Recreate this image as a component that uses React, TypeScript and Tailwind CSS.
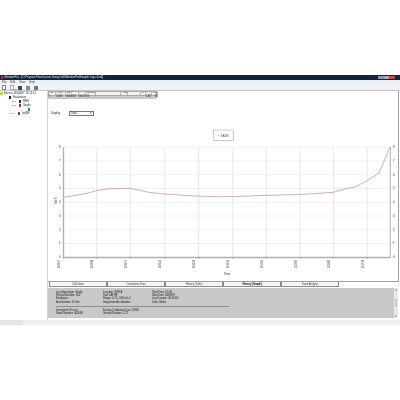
const font = 'font-["Liberation_Sans",Arial,sans-serif]';
const svgFont = 'Liberation Sans, Arial, sans-serif';

const yGrid = [161, 174.8, 188.5, 202.3, 216, 229.8, 243.5, 147.3];
const xGrid = [96.7, 130.3, 164.7, 198.7, 232.7, 266.3, 300, 333.3, 367.3];
const xLabels = ['12:08:17', '12:08:44', '12:09:17', '12:09:50', '12:10:24', '12:10:58', '12:11:32', '12:12:06', '12:12:40', '12:13:14'];
const curve =
  '64,197.3 87,193.3 96,190.7 110,188.7 130,188.3 150,192.5 165,194 195,196 220,196.7 237,196.5 266,195.3 300,194.5 333,192.3 345,189 356,186.7 368,180 379,173 390,147';

const tableHead = ['No', 'Time', 'Date', '', 'Duration', '', 'Peak', '', 'X', 'Y', 'Sel'];

function Chart() {
  return (
    <svg viewBox="48 91 350 190" className="block h-[190px] w-[350px]">
      {yGrid.map((y) => (
        <line key={y} x1={63} x2={390} y1={y} y2={y} stroke="#ebebeb" strokeWidth="0.7" />
      ))}
      {xGrid.map((x) => (
        <line key={x} x1={x} x2={x} y1={147} y2={257} stroke="#dedede" strokeWidth="0.7" />
      ))}
      <line x1={63.5} x2={63.5} y1={147} y2={258} stroke="#b0b0b0" strokeWidth="1.4" />
      <line x1={63} x2={390} y1={257.5} y2={257.5} stroke="#b0b0b0" strokeWidth="1.4" />
      <line x1={390.3} x2={390.3} y1={147} y2={258} stroke="#8c8c8c" strokeWidth="0.7" />
      <polyline points={curve} fill="none" stroke="#c49a9a" strokeWidth="0.8" />

      {[8, 7, 6, 5, 4, 3, 2, 1, 0].map((n, i) => {
        const y = 147.3 + i * 13.73 + 1;
        return (
          <g key={n} fontSize="2.8" fill="#222" fontFamily={svgFont}>
            <text x={59} y={y}>{n}</text>
            <text x={393} y={y}>{n}</text>
          </g>
        );
      })}

      {[63.5, ...xGrid].map((x, i) => (
        <g key={x}>
          <line x1={x} x2={x} y1={257} y2={259} stroke="#777" strokeWidth="0.4" />
          <text
            transform={`translate(${x - 3.5} 268.5) rotate(-90)`}
            fontSize="3"
            fill="#333"
            fontFamily={svgFont}
            textLength={8.5}
            lengthAdjust="spacingAndGlyphs"
          >
            {xLabels[i]}
          </text>
        </g>
      ))}

      <text transform="translate(57 204) rotate(-90)" fontSize="2.8" fill="#222" fontFamily={svgFont}>
        Vel X
      </text>
      <text x={224} y={274.5} fontSize="2.8" fill="#222" fontFamily={svgFont}>
        Time
      </text>

      <rect x={213.5} y={130} width={20} height={10.5} fill="#fff" stroke="#a8a8a8" strokeWidth="0.6" />
      <line x1={217} x2={219.5} y1={135.5} y2={135.5} stroke="#c49a9a" strokeWidth="0.6" />
      <text x={220.5} y={136.5} fontSize="2.6" fill="#333" fontFamily={svgFont}>
        X AXIS
      </text>
    </svg>
  );
}

function Tab({ label, active }: { label: string; active?: boolean }) {
  return (
    <div
      className={`flex h-[5px] w-[58px] items-center justify-center border border-t-0 border-[#8a8a8a] bg-[#f6f6f6] text-[2.8px] leading-none tracking-[-0.1px] ${active ? 'font-bold text-[#111]' : 'text-[#444]'}`}
    >
      {label}
    </div>
  );
}

function TreeRow({ indent, color, label, guide }: { indent: string; color: string; label: string; guide?: boolean }) {
  return (
    <div className={`flex h-[4px] items-center gap-[2px] ${indent}`}>
      {guide && <div className="-ml-[7px] mr-[1px] h-0 w-[4px] border-t-[0.5px] border-dotted border-[#aaa]" />}
      <div className={`h-[3px] w-[2px] ${color}`} />
      <span className="text-[2.8px] leading-none text-[#222]">{label}</span>
    </div>
  );
}

export default function App() {
  return (
    <div className={`flex h-[400px] w-[400px] flex-col overflow-hidden bg-white pt-[75px] blur-[0.2px] ${font}`}>
      {/* title bar */}
      <div className="flex h-[5px] items-center justify-between bg-[#14233c] pl-[1px]">
        <div className="flex items-center gap-[1px]">
          <div className="h-[3px] w-[2px] bg-[#c03030]" />
          <span className="text-[2.8px] leading-none tracking-[-0.05px] text-[#e0e4ea]">
            VibrationPro - [C:\Program Files\Larson Group Ltd\VibrationPro\Sample Logs 4.vdf]
          </span>
        </div>
        <div className="mr-[5px] flex h-[3px]">
          <div className="w-[6px] bg-[#8f98a8]" />
          <div className="w-[5px] bg-[#a7adb8]" />
          <div className="w-[6px] bg-[#c04a45]" />
        </div>
      </div>

      {/* menu */}
      <div className="flex h-[5px] items-center gap-[4px] bg-[#eef1f6] pl-[2px] text-[2.8px] leading-none text-[#333]">
        <span>File</span>
        <span>Edit</span>
        <span>View</span>
        <span>Help</span>
      </div>

      {/* toolbar */}
      <div className="flex h-[6px] items-center border-b border-[#c4c4c4] bg-[#f0f2f6] pl-[2px]">
        <div className="h-[5px] w-[4px] border-[0.5px] border-[#888] bg-white" />
        <div className="ml-[4px] h-[5px] w-[4px] border-[0.5px] border-[#aaa] bg-white" />
        <div className="mt-[3px] h-[1px] w-[3px] bg-[#c9b23a]" />
        <div className="ml-[1px] h-[4px] w-[4px] bg-[#444]" />
        <div className="ml-[4px] h-[4px] w-[4px] bg-[#7a8c8c]" />
        <div className="ml-[4px] h-[4px] w-[4px] bg-[#777]" />
      </div>

      <div className="flex h-[229px]">
        {/* tree */}
        <div className="w-[48px] shrink-0 border-r border-[#d4d4d4]">
          <div className="flex h-[4px] items-center gap-[1px]">
            <div className="h-[3px] w-[3px] bg-[#d8c94a]" />
            <span className="text-[2.8px] leading-none text-[#222]">Excess 06/08/07 11:52:12</span>
          </div>
          <TreeRow indent="pl-[9px]" color="bg-[#222]" label="Evaluators" />
          <TreeRow indent="pl-[19px]" color="bg-[#333]" label="RMS" guide />
          <TreeRow indent="pl-[19px]" color="bg-[#a03030]" label="Single" guide />
          <div className="flex h-[4px] items-center pl-[28px]">
            <div className="h-[3px] w-[2px] bg-[#3a78b8]" />
          </div>
          <TreeRow indent="pl-[18px]" color="bg-[#555]" label="(w)BV" guide />
        </div>

        {/* content */}
        <div className="flex min-w-0 flex-1 flex-col pr-[1px]">
          <div className="relative h-[191px] border-b border-r border-[#a0a0a0]">
            <Chart />
            {/* stats table */}
            <div className="absolute left-0 top-0 w-[109px] text-[2.6px] leading-none text-[#222]">
              <div className="grid h-[5px] grid-cols-[7px_10px_13px_7px_10px_25px_7px_13px_5px_6px_6px] items-center border border-[#a8a8a8] bg-[#f2f2f2]">
                {tableHead.map((h, i) => (
                  <span key={i} className="flex h-full items-center overflow-hidden border-r border-[#b4b4b4] pl-[1px]">
                    {h}
                  </span>
                ))}
              </div>
              <div className="grid h-[3px] grid-cols-[7px_10px_13px_17px_55px_7px] items-center bg-[#c8c8c8] pl-[1px]">
                <span>1</span>
                <span>12:08</span>
                <span>06/08/07</span>
                <span>00:05:05</span>
                <span className="text-right">5.85</span>
                <span className="text-right">No</span>
              </div>
            </div>
            {/* display selector */}
            <div className="absolute left-[3px] top-[20px] flex items-center text-[2.8px] leading-none text-[#222]">
              <span className="w-[18px]">Display</span>
              <div className="flex h-[5px] w-[25px] items-center justify-between border border-[#777] bg-white px-[1px]">
                <span>Data</span>
                <span>▾</span>
              </div>
            </div>
          </div>

          {/* tabs */}
          <div className="flex h-[6px] items-start pl-[1px]">
            <Tab label="Calculator" />
            <Tab label="Cumulative Data" />
            <Tab label="History (Table)" />
            <Tab label="History (Graph)" active />
            <Tab label="Trend Analysis" />
          </div>

          {/* info panel */}
          <div className="flex h-[30px]">
            <div className="flex w-[346px] flex-col bg-[#c8c8c8] pl-[8px] pt-[3px] text-[2.8px] leading-[3.2px] tracking-[-0.1px] text-[#222]">
              <div className="flex">
                <div className="w-[47px]">
                  <div>Log Information: Single</div>
                  <div>Record Number: 100</div>
                  <div>Employee:</div>
                  <div>Acceleration: 10 m/s²</div>
                </div>
                <div className="w-[49px]">
                  <div>Location: SITE A</div>
                  <div>Tool: LATHE</div>
                  <div>Range: 0.70 - 500 m/s 2</div>
                  <div>Integration: Acceleration</div>
                </div>
                <div>
                  <div>Start Time: 12:08</div>
                  <div>Start Date: 06/08/07</div>
                  <div>Log Duration: 00:05:05</div>
                  <div>Units: Metric</div>
                </div>
              </div>
              <div className="mt-[2px] h-[1px] w-[173px] border-b border-r border-[#8c8c8c]" />
              <div className="mt-[2px] flex">
                <div className="w-[47px]">
                  <div>Instrument: Excess</div>
                  <div>Serial Number: 000698</div>
                </div>
                <div>
                  <div>Factory Calibration Due: 5/1/08</div>
                  <div>Version Number: 2.72</div>
                </div>
              </div>
            </div>
            {/* scrollbar */}
            <div className="flex w-[4px] flex-col justify-between bg-[#e6e8ee] py-[1px]">
              <div className="mx-[1px] h-[2px] bg-[#b8bcc6]" />
              <div className="mx-[1px] h-[8px] bg-[#c6cad4]" />
              <div className="mx-[1px] h-[2px] bg-[#b8bcc6]" />
            </div>
          </div>
        </div>
      </div>

      {/* status bar */}
      <div className="flex h-[5px] bg-[#efefef]">
        <div className="w-[23px] bg-[#e4e4e4]" />
      </div>
    </div>
  );
}
